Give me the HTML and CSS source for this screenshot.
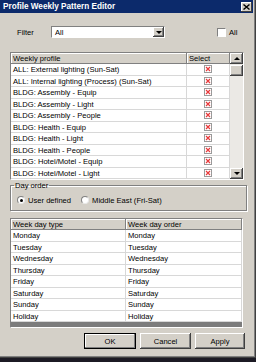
FILE: index.html
```html
<!DOCTYPE html>
<html lang="en">
<head>
    <meta charset="UTF-8">
    <meta name="viewport" content="width=device-width, initial-scale=1.0">
    <title>Profile Weekly Pattern Editor</title>
    <link rel="stylesheet" href="styles.css">
</head>
<body>
    <div class="window">
        <div class="titlebar">
            <span class="title">Profile Weekly Pattern Editor</span>
            <span class="close">
                <svg width="7" height="6" viewBox="0 0 7 6"><path d="M0.5 0.5L6.5 5.5M6.5 0.5L0.5 5.5" stroke="#000" stroke-width="1.4"/></svg>
            </span>
        </div>

        <div class="filter-row">
            <span class="filter-label">Filter</span>
            <div class="combo">
                <span class="combo-text">All</span>
                <span class="combo-btn"><span class="arrow-down"></span></span>
            </div>
            <label class="check"><span class="box"></span>All</label>
        </div>

        <div class="profile-list">
            <div class="list">
                <div class="list-head">
                    <div class="col-name">Weekly profile</div>
                    <div class="col-sel">Select</div>
                </div>
                <div id="profileRows"></div>
            </div>
            <div class="scrollbar">
                <span class="sb-btn"><span class="arrow-up"></span></span>
                <span class="sb-thumb"></span>
                <span class="sb-track"></span>
                <span class="sb-btn"><span class="arrow-down"></span></span>
            </div>
        </div>

        <fieldset class="day-order">
            <legend>Day order</legend>
            <div class="radios">
                <label class="radio"><span class="dot on"></span>User defined</label>
                <label class="radio"><span class="dot"></span>Middle East (Fri-Sat)</label>
            </div>
        </fieldset>

        <div class="day-table">
            <div class="list-head">
                <div class="col-type">Week day type</div>
                <div class="col-order">Week day order</div>
            </div>
            <div id="dayRows"></div>
        </div>

        <div class="buttons">
            <button class="btn btn-ok">OK</button>
            <button class="btn btn-cancel">Cancel</button>
            <button class="btn btn-apply">Apply</button>
        </div>
    </div>

    <script>
        const profiles = [
            "ALL: External lighting (Sun-Sat)",
            "ALL: Internal lighting (Process) (Sun-Sat)",
            "BLDG: Assembly - Equip",
            "BLDG: Assembly - Light",
            "BLDG: Assembly - People",
            "BLDG: Health - Equip",
            "BLDG: Health - Light",
            "BLDG: Health - People",
            "BLDG: Hotel/Motel - Equip",
            "BLDG: Hotel/Motel - Light"
        ];
        const days = ["Monday", "Tuesday", "Wednesday", "Thursday", "Friday", "Saturday", "Sunday", "Holiday"];

        const xIcon = '<svg width="8" height="8" viewBox="0 0 8 8"><rect x="0.5" y="0.5" width="7" height="7" fill="#fff" stroke="#9a9a9a"/><path d="M2 2L6 6M6 2L2 6" stroke="#e8383a" stroke-width="1.2"/></svg>';

        let profileRows = document.getElementById("profileRows");
        profiles.forEach(name => {
            let row = document.createElement("div");
            row.classList.add("row");
            row.innerHTML = `<div class="col-name">${name}</div><div class="col-sel">${xIcon}</div>`;
            profileRows.appendChild(row);
        });

        let dayRows = document.getElementById("dayRows");
        days.forEach(day => {
            let row = document.createElement("div");
            row.classList.add("row");
            row.innerHTML = `<div class="col-type">${day}</div><div class="col-order">${day}</div>`;
            dayRows.appendChild(row);
        });
    </script>
</body>
</html>
```

FILE: styles.css
```css
body {
    margin: 0;
    background: #1c1a24;
    font-family: "Liberation Sans", Arial, sans-serif;
    font-size: 7.6px;
    color: #000;
}
.window {
    width: 256px;
    height: 358px;
    background: #d4d0c8;
    box-shadow: inset -1px -1px #404040, inset -2px -2px #808080;
    overflow: hidden;
}
.titlebar {
    height: 13px;
    margin-right: 3px;
    padding-left: 3px;
    background: #0c2a6b;
    display: flex;
    align-items: center;
    justify-content: space-between;
}
.title {
    color: #fff;
    font-weight: bold;
    font-size: 8.2px;
}
.close {
    width: 11px;
    height: 10px;
    margin-right: 1px;
    background: #d4d0c8;
    box-shadow: inset -1px -1px #404040, inset 1px 1px #fff;
    display: flex;
    align-items: center;
    justify-content: center;
}

/* filter */
.filter-row {
    display: flex;
    align-items: center;
    height: 12px;
    margin-top: 13px;
    padding-left: 17px;
}
.filter-label {
    width: 34px;
}
.combo {
    width: 114px;
    height: 12px;
    box-sizing: border-box;
    background: #fff;
    border: 1px solid;
    border-color: #808080 #fff #fff #808080;
    display: flex;
    justify-content: space-between;
    align-items: center;
}
.combo-text {
    padding-left: 3px;
}
.combo-btn, .sb-btn {
    width: 11px;
    height: 10px;
    box-sizing: border-box;
    background: #d4d0c8;
    box-shadow: inset -1px -1px #404040, inset 1px 1px #fff, inset -2px -2px #808080;
    display: flex;
    align-items: center;
    justify-content: center;
}
.arrow-down {
    width: 0;
    height: 0;
    border-left: 3px solid transparent;
    border-right: 3px solid transparent;
    border-top: 3px solid #000;
}
.arrow-up {
    width: 0;
    height: 0;
    border-left: 3px solid transparent;
    border-right: 3px solid transparent;
    border-bottom: 3px solid #000;
}
.check {
    display: flex;
    align-items: center;
    margin-left: 52px;
}
.box {
    width: 9px;
    height: 9px;
    box-sizing: border-box;
    background: #fff;
    border: 1px solid;
    border-color: #808080 #fff #fff #808080;
    margin-right: 3px;
}

/* grids */
.profile-list {
    display: flex;
    margin: 14px 0 0 10px;
    width: 234px;
    height: 128px;
    box-sizing: border-box;
    border: 1px solid;
    border-color: #808080 #fff #fff #808080;
    background: #fff;
}
.list {
    flex: 1;
    overflow: hidden;
}
.list-head {
    display: flex;
    height: 11px;
    background: #d4d0c8;
}
.list-head div {
    box-sizing: border-box;
    padding-left: 2px;
    line-height: 11px;
    border-right: 1px solid #808080;
    border-bottom: 1px solid #808080;
    box-shadow: inset 1px 1px #fff;
}
.row {
    display: flex;
    height: 11.5px;
    box-sizing: border-box;
    background: #fff;
    border-bottom: 1px solid #d8d8d8;
}
.row div {
    box-sizing: border-box;
    padding-left: 2px;
    line-height: 11px;
    white-space: nowrap;
    border-right: 1px solid #d8d8d8;
}
.col-name {
    width: 176px;
}
.col-sel {
    flex: 1;
}
.row .col-sel {
    display: flex;
    align-items: center;
    justify-content: center;
    padding-left: 0;
}
.scrollbar {
    width: 13px;
    display: flex;
    flex-direction: column;
    background: #ebe9e5;
}
.scrollbar .sb-btn {
    width: 13px;
    height: 11px;
}
.sb-thumb {
    height: 11px;
    margin-top: 1px;
    background: #d4d0c8;
    box-shadow: inset -1px -1px #404040, inset 1px 1px #fff, inset -2px -2px #808080;
}
.sb-track {
    flex: 1;
}

/* day order */
.day-order {
    margin: 1px 9px 0 10px;
    padding: 5px 0 5px 0;
    border: 1px solid #808080;
    box-shadow: inset 1px 1px #fff, 1px 1px #fff;
}
.day-order legend {
    margin-left: 3px;
    padding: 0 1px;
    line-height: 9px;
}
.radios {
    display: flex;
    align-items: center;
    height: 10px;
    padding-left: 6px;
}
.radio {
    display: flex;
    align-items: center;
    margin-right: 10px;
    white-space: nowrap;
}
.dot {
    width: 8px;
    height: 8px;
    box-sizing: border-box;
    border-radius: 50%;
    background: #fff;
    border: 1px solid;
    border-color: #808080 #e8e8e8 #e8e8e8 #808080;
    margin-right: 3px;
    display: flex;
    align-items: center;
    justify-content: center;
}
.dot.on::after {
    content: "";
    width: 3px;
    height: 3px;
    border-radius: 50%;
    background: #000;
}

.day-table {
    margin: 7px 0 0 10px;
    width: 233px;
    height: 110px;
    box-sizing: border-box;
    border: 1px solid;
    border-color: #808080 #fff #fff #808080;
    background: #7c7c7c;
    overflow: hidden;
}
.col-type {
    width: 115px;
}
.col-order {
    flex: 1;
}

/* buttons */
.buttons {
    display: flex;
    justify-content: flex-end;
    gap: 4px;
    margin-top: 5px;
    padding-right: 11px;
}
.btn {
    height: 16px;
    padding: 0;
    font-family: "Liberation Sans", Arial, sans-serif;
    font-size: 7.6px;
    color: #000;
    background: #d4d0c8;
    border: none;
    box-shadow: inset -1px -1px #404040, inset 1px 1px #fff, inset -2px -2px #808080;
}
.btn-ok {
    width: 52px;
    box-shadow: inset 0 0 0 1px #000, inset -2px -2px #808080, inset 2px 2px #fff;
}
.btn-cancel {
    width: 51px;
}
.btn-apply {
    width: 50px;
}
```
